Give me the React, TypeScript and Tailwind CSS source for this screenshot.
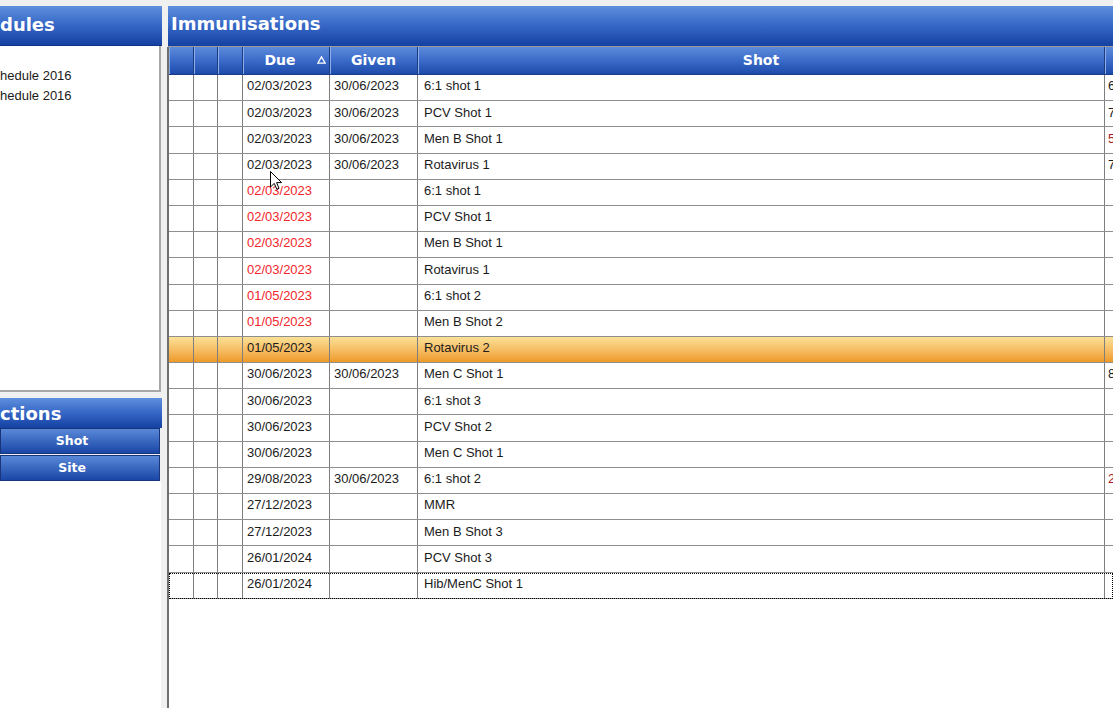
import React from 'react';

type Row = { due: string; given: string; shot: string; late?: boolean; selected?: boolean; focus?: boolean; extra?: string; extraRed?: boolean };

const rows: Row[] = [
  { due: '02/03/2023', given: '30/06/2023', shot: '6:1 shot 1', extra: '6' },
  { due: '02/03/2023', given: '30/06/2023', shot: 'PCV Shot 1', extra: '7' },
  { due: '02/03/2023', given: '30/06/2023', shot: 'Men B Shot 1', extra: '5', extraRed: true },
  { due: '02/03/2023', given: '30/06/2023', shot: 'Rotavirus 1', extra: '7' },
  { due: '02/03/2023', given: '', shot: '6:1 shot 1', late: true },
  { due: '02/03/2023', given: '', shot: 'PCV Shot 1', late: true },
  { due: '02/03/2023', given: '', shot: 'Men B Shot 1', late: true },
  { due: '02/03/2023', given: '', shot: 'Rotavirus 1', late: true },
  { due: '01/05/2023', given: '', shot: '6:1 shot 2', late: true },
  { due: '01/05/2023', given: '', shot: 'Men B Shot 2', late: true },
  { due: '01/05/2023', given: '', shot: 'Rotavirus 2', selected: true },
  { due: '30/06/2023', given: '30/06/2023', shot: 'Men C Shot 1', extra: '8' },
  { due: '30/06/2023', given: '', shot: '6:1 shot 3' },
  { due: '30/06/2023', given: '', shot: 'PCV Shot 2' },
  { due: '30/06/2023', given: '', shot: 'Men C Shot 1' },
  { due: '29/08/2023', given: '30/06/2023', shot: '6:1 shot 2', extra: '2', extraRed: true },
  { due: '27/12/2023', given: '', shot: 'MMR' },
  { due: '27/12/2023', given: '', shot: 'Men B Shot 3' },
  { due: '26/01/2024', given: '', shot: 'PCV Shot 3' },
  { due: '26/01/2024', given: '', shot: 'Hib/MenC Shot 1', focus: true },
];

const titleBar = 'bg-gradient-to-b from-[#5f8fdc] via-[#3566c6] to-[#1441a2] text-white font-bold font-["DejaVu_Sans",sans-serif]';
const headCell = 'h-full shrink-0 border-r border-[#1c3b82] shadow-[inset_1px_0_0_#8aaee8] flex items-center justify-center';
const btn = 'w-[160px] h-[26px] border border-[#17357a] bg-gradient-to-b from-[#5a88d8] to-[#1a46a6] text-white font-bold text-[12.5px] font-["DejaVu_Sans",sans-serif] pr-[16px]';

export default function App() {
  return (
    <div className="w-[1113px] h-[708px] bg-[#f0f0f0] flex overflow-hidden font-['Liberation_Sans',Arial,sans-serif] text-[13px] text-[#1b1b1b] relative">
      {/* left column */}
      <div className="w-[162px] shrink-0 flex flex-col pt-[6px]">
        <div className={`${titleBar} h-[40px] text-[18px] flex items-center pb-[2px] border-b border-[#0e3388]`}>dules</div>
        <div className="h-[346px] w-[161px] bg-white border-r-2 border-b-2 border-[#a7a7a7] pt-[20px] leading-[20px]">
          <div>hedule 2016</div>
          <div>hedule 2016</div>
        </div>
        <div className={`${titleBar} mt-[6px] h-[30px] text-[18px] flex items-center`}>ctions</div>
        <button className={btn}>Shot</button>
        <button className={`${btn} mt-[1px]`}>Site</button>
        <div className="flex-1 bg-white w-[161px]" />
      </div>

      {/* right column */}
      <div className="flex-1 ml-[5px] flex flex-col pt-[6px] min-w-0">
        <div className={`${titleBar} ml-[1px] h-[41px] text-[18px] flex items-center pl-[3px] pb-[5px] border-b border-[#9a9a9a]`}>Immunisations</div>
        <div className="flex-1 bg-white border-l-2 border-[#6e6e6e] overflow-hidden">
          {/* header row */}
          <div className="h-[28px] flex bg-gradient-to-b from-[#5d8bda] via-[#3a6bc9] to-[#1d4bab] text-white font-bold text-[14px] font-['DejaVu_Sans',sans-serif] border-b border-[#173a85]">
            <div className={`${headCell} w-[25px]`} />
            <div className={`${headCell} w-[24px]`} />
            <div className={`${headCell} w-[25px]`} />
            <div className={`${headCell} w-[87px] relative`}>
              <span className="mr-[12px]">Due</span>
              <svg className="absolute right-[3px] top-[9px]" width="9" height="8" viewBox="0 0 9 8">
                <path d="M4.5 0.8 L8.2 7.2 L0.8 7.2 Z" fill="none" stroke="white" strokeWidth="1.3" />
              </svg>
            </div>
            <div className={`${headCell} w-[88px]`}>Given</div>
            <div className={`${headCell} w-[687px]`}>Shot</div>
            <div className={`${headCell} w-[40px]`} />
          </div>
          {/* rows */}
          {rows.map((r, i) => (
            <div
              key={i}
              className={`h-[26.2px] flex items-stretch border-b border-[#8e8e8e] ${r.selected ? 'bg-gradient-to-b from-[#fbe196] to-[#ee9a24]' : ''} ${r.focus ? 'outline-1 outline-dotted outline-black -outline-offset-1' : ''}`}
            >
              <div className="w-[25px] shrink-0 border-r border-[#7e7e7e]" />
              <div className="w-[24px] shrink-0 border-r border-[#7e7e7e]" />
              <div className="w-[25px] shrink-0 border-r border-[#7e7e7e]" />
              <div className={`w-[87px] shrink-0 border-r border-[#7e7e7e] pl-[4px] pb-[3px] flex items-center ${r.late ? 'text-[#f2262c]' : ''}`}>{r.due}</div>
              <div className="w-[88px] shrink-0 border-r border-[#7e7e7e] pl-[4px] pb-[3px] flex items-center">{r.given}</div>
              <div className="w-[687px] shrink-0 border-r border-[#7e7e7e] pl-[6px] pb-[3px] flex items-center">{r.shot}</div>
              <div className={`w-[40px] shrink-0 pl-[3px] pb-[3px] flex items-center ${r.extraRed ? 'text-[#a8191d]' : ''}`}>{r.extra}</div>
            </div>
          ))}
        </div>
      </div>

      {/* mouse pointer */}
      <svg className="absolute left-[270px] top-[171px]" width="13" height="20" viewBox="0 0 13 20">
        <path d="M0.5 0.5 L0.5 16 L4.3 12.4 L6.8 18.3 L9 17.3 L6.6 11.6 L11.6 11.6 Z" fill="white" stroke="black" strokeWidth="1" strokeLinejoin="round" />
      </svg>
    </div>
  );
}
